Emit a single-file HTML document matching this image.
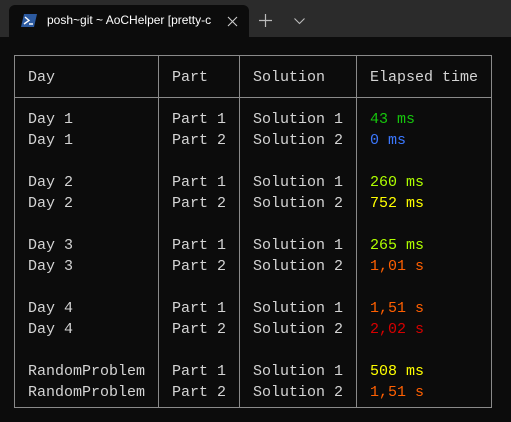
<!DOCTYPE html><html><head><style>
body{margin:0;width:511px;height:422px;background:#0c0c0c;overflow:hidden;font-family:"Liberation Mono",monospace;font-size:15px;color:#cccccc;position:relative}
.bar{position:absolute;left:0;top:0;width:511px;height:37px;background:#2b2b2b}
.tab{position:absolute;left:9px;top:5px;width:240px;height:32px;background:#0c0c0c;border-radius:6px 6px 0 0}
.tt{position:absolute;left:47px;top:13px;font-family:"Liberation Sans",sans-serif;font-size:12px;color:#fff}
.l{position:absolute;background:#8a8a8a}
.t{position:absolute;white-space:pre;line-height:21px;color:#d4d4d4}
</style></head><body>
<div class="bar"></div>
<div class="tab"></div>
<svg style="position:absolute;left:21px;top:14px" width="16" height="13" viewBox="0 0 16 13"><path d="M3 0H16L13 13H0Z" fill="#2c5aa0"/><path d="M4 3L8 6.5L3 10" stroke="#fff" stroke-width="1.4" fill="none"/><path d="M8 10H12" stroke="#fff" stroke-width="1.4"/></svg>
<div class="tt">posh~git ~ AoCHelper [pretty-c</div>
<svg style="position:absolute;left:227px;top:16px" width="11" height="11"><path d="M1 1L10 10M10 1L1 10" stroke="#ccc" stroke-width="1.1"/></svg>
<svg style="position:absolute;left:259px;top:14px" width="13" height="13"><path d="M6.5 0V13M0 6.5H13" stroke="#bbb" stroke-width="1.2"/></svg>
<svg style="position:absolute;left:294px;top:18px" width="11" height="7"><path d="M0.5 0.5L5.5 5.5L10.5 0.5" stroke="#bbb" stroke-width="1.1" fill="none"/></svg>
<div class="l" style="left:14px;top:55px;width:478px;height:1px"></div>
<div class="l" style="left:14px;top:407px;width:478px;height:1px"></div>
<div class="l" style="left:14px;top:97px;width:478px;height:1px"></div>
<div class="l" style="left:14px;top:55px;width:1px;height:353px"></div>
<div class="l" style="left:491px;top:55px;width:1px;height:353px"></div>
<div class="l" style="left:158px;top:55px;width:1px;height:353px"></div>
<div class="l" style="left:239px;top:55px;width:1px;height:353px"></div>
<div class="l" style="left:356px;top:55px;width:1px;height:353px"></div>
<div class="t" style="left:28px;top:67px">Day</div>
<div class="t" style="left:172px;top:67px">Part</div>
<div class="t" style="left:253px;top:67px">Solution</div>
<div class="t" style="left:370px;top:67px">Elapsed time</div>
<div class="t" style="left:28px;top:109px">Day 1
Day 1

Day 2
Day 2

Day 3
Day 3

Day 4
Day 4

RandomProblem
RandomProblem</div>
<div class="t" style="left:172px;top:109px">Part 1
Part 2

Part 1
Part 2

Part 1
Part 2

Part 1
Part 2

Part 1
Part 2</div>
<div class="t" style="left:253px;top:109px">Solution 1
Solution 2

Solution 1
Solution 2

Solution 1
Solution 2

Solution 1
Solution 2

Solution 1
Solution 2</div>
<div class="t" style="left:370px;top:109px"><span style="color:#16c60c">43 ms</span>
<span style="color:#3b78ff">0 ms</span>

<span style="color:#afff00">260 ms</span>
<span style="color:#ffff00">752 ms</span>

<span style="color:#afff00">265 ms</span>
<span style="color:#ff5f00">1,01 s</span>

<span style="color:#ff5f00">1,51 s</span>
<span style="color:#d70000">2,02 s</span>

<span style="color:#ffff00">508 ms</span>
<span style="color:#ff5f00">1,51 s</span></div>
</body></html>
